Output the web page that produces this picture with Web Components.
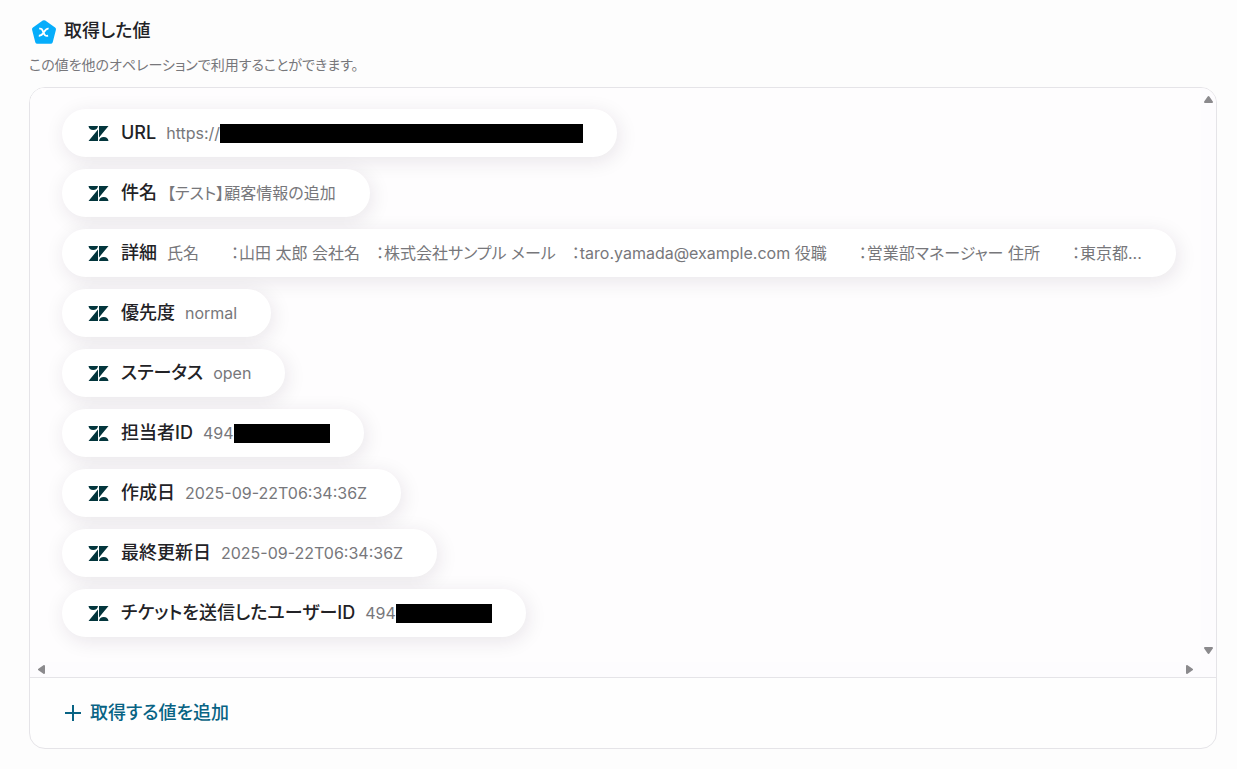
<!DOCTYPE html>
<html lang="ja">
<head>
<meta charset="utf-8">
<meta name="viewport" content="width=device-width, initial-scale=1">
<title>取得した値</title>
<style>
    body {
        margin: 0;
        background: #fdfdfd;
        color: #222226;
        font-family: Inter, "Noto Sans CJK JP", sans-serif;
        font-feature-settings: "palt";
    }
</style>
</head>
<body>
<output-section>
    <span slot="title">取得した値</span>
    <span slot="description">この値を他のオペレーションで利用することができます。</span>
    <scroll-list>
        <value-chip label="URL">https://<redacted-bar size="long"></redacted-bar></value-chip>
        <value-chip label="件名">【テスト】顧客情報の追加</value-chip>
        <value-chip label="詳細">氏名　　：山田 太郎 会社名　：株式会社サンプル メール　：taro.yamada@example.com 役職　　：営業部マネージャー 住所　　：東京都...</value-chip>
        <value-chip label="優先度">normal</value-chip>
        <value-chip label="ステータス">open</value-chip>
        <value-chip label="担当者ID">494<redacted-bar></redacted-bar></value-chip>
        <value-chip label="作成日">2025-09-22T06:34:36Z</value-chip>
        <value-chip label="最終更新日">2025-09-22T06:34:36Z</value-chip>
        <value-chip label="チケットを送信したユーザーID">494<redacted-bar></redacted-bar></value-chip>
    </scroll-list>
    <add-button slot="footer">取得する値を追加</add-button>
</output-section>

<script>
const withTemplate = html => {
    const template = document.createElement("template");
    template.innerHTML = html;

    return class extends HTMLElement {
        constructor() {
            super();
            this._shadowRoot = this.attachShadow({ mode: "open" });
            this._shadowRoot.appendChild(template.content.cloneNode(true));
        }
    };
};

class OutputSection extends withTemplate(`
<style>
    :host {
        display: block;
        padding: 16px 20px 20px 29px;
    }

    header {
        display: flex;
        align-items: center;
        gap: 6px;
        height: 30px;
    }

    header svg {
        width: 29px;
        height: 29px;
    }

    h2 {
        margin: 0;
        font-size: 18px;
        line-height: 30px;
        font-weight: 500;
    }

    p {
        margin: 9px 0 12px;
        font-size: 14px;
        line-height: 20px;
        color: #77777b;
    }

    .panel {
        border: 1px solid #e5e4e8;
        border-radius: 16px;
        background: #fefefe;
        overflow: hidden;
    }

    footer {
        display: flex;
        align-items: center;
        height: 70px;
        padding: 0 35px;
        border-top: 1px solid #e5e4e8;
    }
</style>
<header>
    <svg viewBox="0 0 29 29" aria-hidden="true">
        <path d="M15 5.4 24.8 12.2 21.6 24.6H8.4L5.2 12.2Z" fill="#06adfb" stroke="#06adfb" stroke-width="4.4" stroke-linejoin="round"/>
        <path d="M10.2 11.6c2.4-.4 2.9.7 4.2 3.7s1.9 4 4.7 3.4M19.6 11.6c-2.2-.4-3.2 1.2-4.8 3.7s-2.5 3.8-5 3.4" fill="none" stroke="#fff" stroke-width="1.8"/>
    </svg>
    <h2><slot name="title"></slot></h2>
</header>
<p><slot name="description"></slot></p>
<div class="panel">
    <slot></slot>
    <footer><slot name="footer"></slot></footer>
</div>`) {}

class ScrollList extends withTemplate(`
<style>
    :host {
        display: grid;
        grid-template-columns: minmax(0, 1fr) 15px;
        grid-template-rows: auto 15px;
        background: #fdfcfe;
    }

    .content {
        display: flex;
        flex-direction: column;
        align-items: flex-start;
        gap: 12px;
        padding: 21px 32px 25px;
        overflow: hidden;
        background: #fefdfe;
    }

    .bar {
        display: flex;
        align-items: center;
        justify-content: space-between;
    }

    .vertical {
        flex-direction: column;
        padding: 4px 0;
    }

    .horizontal {
        padding: 0 4px;
    }

    button {
        display: flex;
        align-items: center;
        justify-content: center;
        width: 15px;
        height: 15px;
        padding: 0;
        border: 0;
        background: none;
    }

    svg {
        width: 9px;
        height: 9px;
        fill: #8b8a8d;
        stroke: #8b8a8d;
        stroke-width: 2;
        stroke-linejoin: round;
    }
</style>
<div class="content"><slot></slot></div>
<div class="bar vertical">
    <button type="button" aria-label="上へ"><svg viewBox="0 0 9 9"><path d="M4.5 2 8 7H1Z"/></svg></button>
    <button type="button" aria-label="下へ"><svg viewBox="0 0 9 9"><path d="M4.5 7 8 2H1Z"/></svg></button>
</div>
<div class="bar horizontal">
    <button type="button" aria-label="左へ"><svg viewBox="0 0 9 9"><path d="M2 4.5 7 1V8Z"/></svg></button>
    <button type="button" aria-label="右へ"><svg viewBox="0 0 9 9"><path d="M7 4.5 2 1V8Z"/></svg></button>
</div>`) {
    connectedCallback() {
        const content = this._shadowRoot.querySelector(".content");
        const steps = [[0, -60], [0, 60], [-60, 0], [60, 0]];
        this._shadowRoot.querySelectorAll("button").forEach((button, i) => {
            button.addEventListener("click", () => content.scrollBy(...steps[i]));
        });
    }
}

class ValueChip extends withTemplate(`
<style>
    :host {
        display: flex;
        align-items: center;
        box-sizing: border-box;
        height: 48px;
        padding: 0 34px 0 26px;
        border-radius: 24px;
        background: #fff;
        box-shadow: 2px 4px 20px rgba(40, 20, 50, 0.1);
        white-space: nowrap;
    }

    svg {
        flex: none;
        width: 21px;
        height: 16px;
        margin-right: 12px;
        fill: #03363d;
    }

    .text {
        display: flex;
        align-items: baseline;
        gap: 10px;
    }

    .label {
        font-size: 18px;
        line-height: 24px;
        font-weight: 500;
    }

    .value {
        display: flex;
        align-items: center;
        font-size: 16px;
        line-height: 24px;
        color: #77777b;
        white-space: pre;
    }
</style>
<svg viewBox="0 0 21 16" aria-hidden="true">
    <path d="M.5 1H10A4.8 4.8 0 0 1 .5 1ZM10 4.6V16H.5ZM11 1H20.5L11 12.4ZM11 16A4.8 4.8 0 0 1 20.5 16Z"/>
</svg>
<span class="text">
    <span class="label"></span>
    <span class="value"><slot></slot></span>
</span>`) {
    static get observedAttributes() {
        return ["label"];
    }

    attributeChangedCallback(name, oldValue, newValue) {
        this._shadowRoot.querySelector(".label").textContent = newValue;
    }
}

class RedactedBar extends withTemplate(`
<style>
    :host {
        display: block;
        width: 96px;
        height: 19px;
        background: #000;
    }

    :host([size="long"]) {
        width: 363px;
    }
</style>`) {}

class AddButton extends withTemplate(`
<style>
    button {
        display: flex;
        align-items: center;
        gap: 9px;
        padding: 0;
        border: 0;
        background: none;
        color: #086384;
        font: inherit;
        font-feature-settings: inherit;
        font-size: 18px;
        line-height: 24px;
        font-weight: 500;
        cursor: pointer;
    }

    svg {
        width: 16px;
        height: 16px;
        stroke: currentColor;
        stroke-width: 2;
    }
</style>
<button type="button">
    <svg viewBox="0 0 16 16" aria-hidden="true"><path d="M8 0V16M0 8H16"/></svg>
    <slot></slot>
</button>`) {}

window.customElements.define("redacted-bar", RedactedBar);
window.customElements.define("value-chip", ValueChip);
window.customElements.define("scroll-list", ScrollList);
window.customElements.define("add-button", AddButton);
window.customElements.define("output-section", OutputSection);
</script>
</body>
</html>
